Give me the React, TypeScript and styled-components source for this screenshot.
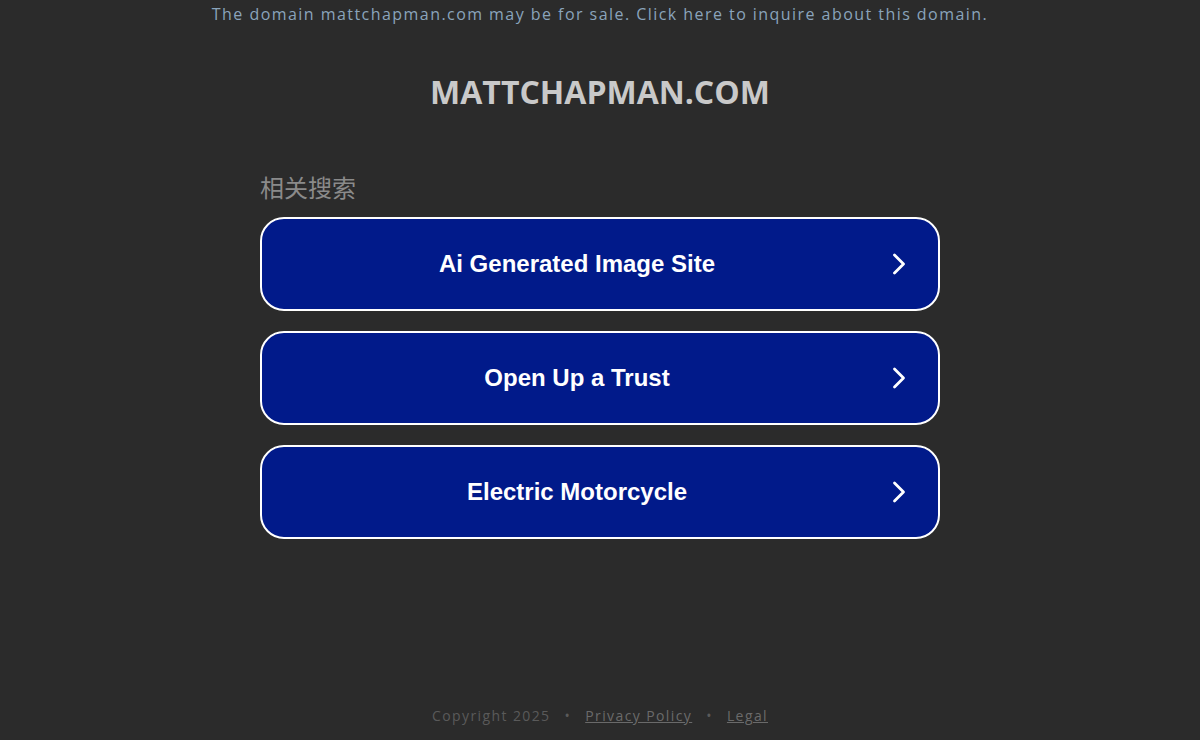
import React from "react";
import styled, { createGlobalStyle } from "styled-components";

const Global = createGlobalStyle`
  html, body { margin: 0; padding: 0; background: #2b2b2b; }
  body { font-family: "Open Sans", "Noto Sans", sans-serif; }
`;

const Page = styled.div`
  width: 1200px;
  height: 740px;
  display: flex;
  flex-direction: column;
  align-items: center;
  background: #2b2b2b;
`;

const TopNotice = styled.a`
  display: block;
  margin-top: 3px;
  font-size: 16px;
  line-height: 22px;
  color: #8aa4bc;
  text-decoration: none;
  letter-spacing: 1.45px;
`;

const Title = styled.h1`
  margin: 48px 0 0;
  font-family: "Open Sans", "Noto Sans", sans-serif;
  font-weight: 700;
  font-size: 32px;
  line-height: 38px;
  color: #c9c9c9;
`;

const Related = styled.section`
  width: 680px;
  margin-top: 61px;
  display: flex;
  flex-direction: column;
`;

const RelatedHeading = styled.h2`
  margin: 0 0 15px;
  font-family: "Noto Sans CJK SC", sans-serif;
  font-weight: 400;
  font-size: 24px;
  line-height: 30px;
  color: #8a8a8a;
`;

const List = styled.div`
  display: flex;
  flex-direction: column;
  gap: 20px;
`;

const LinkButton = styled.a`
  box-sizing: border-box;
  height: 94px;
  border: 2px solid #ffffff;
  border-radius: 24px;
  background: #011a8a;
  display: flex;
  align-items: center;
  padding: 0 32px 0 0;
  color: #ffffff;
  text-decoration: none;
  font-family: "Liberation Sans", Arial, sans-serif;
  font-weight: 700;
  font-size: 24px;
`;

const Label = styled.span`
  flex: 1;
  text-align: center;
`;

const Chevron = styled.svg`
  width: 14px;
  height: 24px;
  flex: none;
`;

const Footer = styled.footer`
  margin-top: auto;
  margin-bottom: 14px;
  display: flex;
  gap: 14px;
  font-size: 14px;
  line-height: 20px;
  color: #5a5a5a;
  letter-spacing: 1.4px;
`;

const FooterLink = styled.a`
  color: #6a6a6a;
  text-decoration: underline;
`;

const items = ["Ai Generated Image Site", "Open Up a Trust", "Electric Motorcycle"];

export default function App() {
  return (
    <>
      <Global />
      <Page>
        <TopNotice href="#">
          The domain mattchapman.com may be for sale. Click here to inquire about this domain.
        </TopNotice>
        <Title>MATTCHAPMAN.COM</Title>
        <Related>
          <RelatedHeading>相关搜索</RelatedHeading>
          <List>
            {items.map((t) => (
              <LinkButton key={t} href="#">
                <Label>{t}</Label>
                <Chevron viewBox="0 0 14 24">
                  <path d="M2.5 3 L11.5 12 L2.5 21" fill="none" stroke="#fff" strokeWidth="2.8" strokeLinecap="round" strokeLinejoin="round" />
                </Chevron>
              </LinkButton>
            ))}
          </List>
        </Related>
        <Footer>
          <span>Copyright 2025</span>
          <span>•</span>
          <FooterLink href="#">Privacy Policy</FooterLink>
          <span>•</span>
          <FooterLink href="#">Legal</FooterLink>
        </Footer>
      </Page>
    </>
  );
}
